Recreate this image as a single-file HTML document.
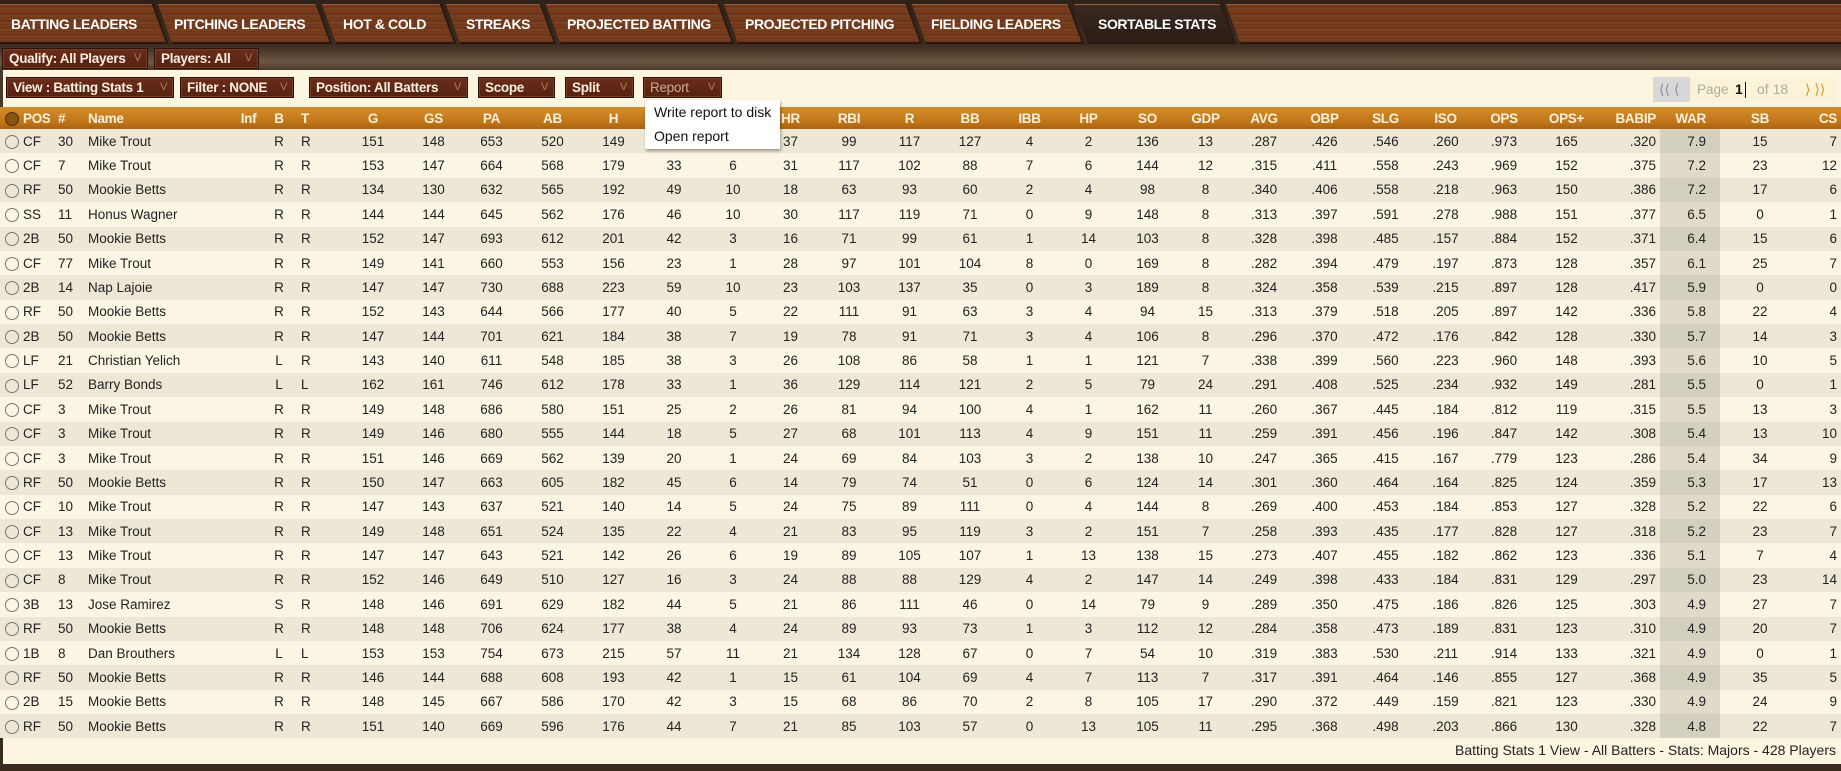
<!DOCTYPE html>
<html><head><meta charset="utf-8"><style>
*{margin:0;padding:0;box-sizing:border-box}
body{width:1841px;height:771px;overflow:hidden;position:relative;background:#3a2a1f;font-family:"Liberation Sans",sans-serif}
.bg{position:absolute;left:0;top:0;width:1841px;height:771px;background:linear-gradient(180deg,#2e2119 0,#3d2b20 45px,#5a4535 55px,#6e5744 62px,#4a382a 70px,#3a2a1f 100%)}
.tabbar{position:absolute;left:0;top:4px;height:40px;width:1841px;overflow:hidden}
.tab{position:absolute;top:0;height:40px;transform:skewX(20deg);background:repeating-linear-gradient(180deg,#7a3f20 0,#6a3318 3px,#7e4422 5px,#6b3419 7px);border-right:2px solid #2a1a12;border-bottom:2px solid #2a1710;box-shadow:inset 0 1px 0 #9a5a32}
.tab.act{background:linear-gradient(180deg,#3a2a20,#2a1d16)}
.tl{position:absolute;top:12px;font-weight:bold;font-size:14px;color:#fff;letter-spacing:-0.4px;white-space:nowrap}
.btn{position:absolute;height:21px;background:linear-gradient(180deg,#6a2d1a,#55220f);border:1px solid #2c130a;box-shadow:inset 0 0 0 1px #7b3c24;color:#fbeee0;font-weight:bold;font-size:13.5px;letter-spacing:-0.3px;line-height:19px;padding-left:6px;white-space:nowrap}
.btn i{position:absolute;right:6px;top:0;font-style:normal;font-weight:normal;color:#b07a60;font-size:11px}
.panel{position:absolute;left:3px;top:70px;width:1838px;height:694px;background:#fcf6e0}
table{position:absolute;left:0;top:107px;border-collapse:collapse;table-layout:fixed;width:1841px;font-size:13.5px;color:#222}
td{height:24.375px;text-align:center;white-space:nowrap;overflow:hidden;padding:0}
thead td{height:22px;background:linear-gradient(180deg,#d38d2c,#c07518 70%,#a86212);color:#fbf0dc;font-weight:bold;font-size:13.5px;letter-spacing:-0.3px}
tbody tr:nth-child(odd) td{background:#ede8d5}
tbody tr:nth-child(even) td{background:#fbf6e3}
tbody tr:nth-child(odd) td.w{background:#d4d0be}
tbody tr:nth-child(even) td.w{background:#dfdbc8}
td.l{text-align:left}
td.p{text-align:left;padding-left:3px}
td.r{text-align:right;padding-right:4px}
td.w{text-align:right;padding-right:14px}
.rad{display:inline-block;width:14px;height:14px;border:1.5px solid #777;border-radius:50%;vertical-align:middle;margin-left:4px}
.rad.hd{background:#8a5412;border-color:#4e300c}
.menu{position:absolute;left:645px;top:100px;width:135px;height:49px;background:#fff;box-shadow:1px 2px 3px rgba(0,0,0,.35);font-size:14px;color:#111;z-index:3}
.menu div{height:24px;line-height:24px;padding-left:9px}
.pager{position:absolute;left:1653px;top:77px;width:184px;height:25px;background:#fbf3d8;font-size:14px;line-height:25px}
</style></head><body>
<div class="bg"></div>
<div class="tabbar">
<div class="tab" style="left:-10px;width:171px"></div>
<div class="tab" style="left:165px;width:160px"></div>
<div class="tab" style="left:329px;width:120px"></div>
<div class="tab" style="left:453px;width:96px"></div>
<div class="tab" style="left:553px;width:174px"></div>
<div class="tab" style="left:731px;width:184px"></div>
<div class="tab" style="left:919px;width:158px"></div>
<div class="tab act" style="left:1081px;width:148px"></div>
<div class="tab" style="left:1233px;width:640px"></div>
<span class="tl" style="left:11px">BATTING LEADERS</span>
<span class="tl" style="left:174px">PITCHING LEADERS</span>
<span class="tl" style="left:343px">HOT &amp; COLD</span>
<span class="tl" style="left:466px">STREAKS</span>
<span class="tl" style="left:567px">PROJECTED BATTING</span>
<span class="tl" style="left:745px">PROJECTED PITCHING</span>
<span class="tl" style="left:931px">FIELDING LEADERS</span>
<span class="tl" style="left:1098px">SORTABLE STATS</span>
</div>
<div class="btn" style="left:2px;top:48px;width:146px">Qualify: All Players<i>V</i></div>
<div class="btn" style="left:154px;top:48px;width:105px">Players: All<i>V</i></div>
<div class="panel"></div>
<div class="btn" style="left:6px;top:77px;width:168px">View : Batting Stats 1<i>V</i></div>
<div class="btn" style="left:180px;top:77px;width:114px">Filter : NONE<i>V</i></div>
<div class="btn" style="left:309px;top:77px;width:159px">Position: All Batters<i>V</i></div>
<div class="btn" style="left:478px;top:77px;width:77px">Scope<i>V</i></div>
<div class="btn" style="left:565px;top:77px;width:69px">Split<i>V</i></div>
<div class="btn" style="left:643px;top:77px;width:79px;color:#c9a898;font-weight:normal">Report<i>V</i></div>
<div class="menu"><div>Write report to disk</div><div>Open report</div></div>
<div class="pager"><span style="position:absolute;left:0;top:0;width:37px;height:25px;background:#d8d8d8;color:#8a8fa0;padding-left:6px">⟨⟨ ⟨</span><span style="position:absolute;left:44px;color:#b0ab9c;font-size:13.5px">Page</span><span style="position:absolute;left:82px;color:#111;font-weight:bold">1</span><span style="position:absolute;left:92px;top:5px;width:1px;height:16px;background:#111"></span><span style="position:absolute;left:104px;color:#b0ab9c">of 18</span><span style="position:absolute;left:152px;color:#e0951c">⟩ ⟩⟩</span></div>
<table>
<colgroup><col style="width:20px"><col style="width:30px"><col style="width:34px"><col style="width:148px"><col style="width:33px"><col style="width:28px"><col style="width:47px"><col style="width:66px"><col style="width:55px"><col style="width:61px"><col style="width:61px"><col style="width:61px"><col style="width:60px"><col style="width:58px"><col style="width:57px"><col style="width:60px"><col style="width:61px"><col style="width:60px"><col style="width:59px"><col style="width:59px"><col style="width:59px"><col style="width:57px"><col style="width:60px"><col style="width:61px"><col style="width:61px"><col style="width:59px"><col style="width:58px"><col style="width:67px"><col style="width:60px"><col style="width:60px"><col style="width:80px"><col style="width:41px"></colgroup>
<thead>
<tr><td><span class="rad hd"></span></td><td class="p">POS</td><td class="l" style="padding-left:8px">#</td><td class="l" style="padding-left:4px">Name</td><td>Inf</td><td>B</td><td class="l" style="padding-left:8px">T</td><td>G</td><td>GS</td><td>PA</td><td>AB</td><td>H</td><td>2B</td><td>3B</td><td>HR</td><td>RBI</td><td>R</td><td>BB</td><td>IBB</td><td>HP</td><td>SO</td><td>GDP</td><td>AVG</td><td>OBP</td><td>SLG</td><td>ISO</td><td>OPS</td><td>OPS+</td><td class="r">BABIP</td><td class="w">WAR</td><td>SB</td><td class="r">CS</td></tr>
</thead>
<tbody>
<tr><td><span class="rad"></span></td><td class="p">CF</td><td class="l" style="padding-left:8px">30</td><td class="l" style="padding-left:4px">Mike Trout</td><td></td><td>R</td><td class="l" style="padding-left:8px">R</td><td>151</td><td>148</td><td>653</td><td>520</td><td>149</td><td>31</td><td>3</td><td>37</td><td>99</td><td>117</td><td>127</td><td>4</td><td>2</td><td>136</td><td>13</td><td>.287</td><td>.426</td><td>.546</td><td>.260</td><td>.973</td><td>165</td><td class="r">.320</td><td class="w">7.9</td><td>15</td><td class="r">7</td></tr>
<tr><td><span class="rad"></span></td><td class="p">CF</td><td class="l" style="padding-left:8px">7</td><td class="l" style="padding-left:4px">Mike Trout</td><td></td><td>R</td><td class="l" style="padding-left:8px">R</td><td>153</td><td>147</td><td>664</td><td>568</td><td>179</td><td>33</td><td>6</td><td>31</td><td>117</td><td>102</td><td>88</td><td>7</td><td>6</td><td>144</td><td>12</td><td>.315</td><td>.411</td><td>.558</td><td>.243</td><td>.969</td><td>152</td><td class="r">.375</td><td class="w">7.2</td><td>23</td><td class="r">12</td></tr>
<tr><td><span class="rad"></span></td><td class="p">RF</td><td class="l" style="padding-left:8px">50</td><td class="l" style="padding-left:4px">Mookie Betts</td><td></td><td>R</td><td class="l" style="padding-left:8px">R</td><td>134</td><td>130</td><td>632</td><td>565</td><td>192</td><td>49</td><td>10</td><td>18</td><td>63</td><td>93</td><td>60</td><td>2</td><td>4</td><td>98</td><td>8</td><td>.340</td><td>.406</td><td>.558</td><td>.218</td><td>.963</td><td>150</td><td class="r">.386</td><td class="w">7.2</td><td>17</td><td class="r">6</td></tr>
<tr><td><span class="rad"></span></td><td class="p">SS</td><td class="l" style="padding-left:8px">11</td><td class="l" style="padding-left:4px">Honus Wagner</td><td></td><td>R</td><td class="l" style="padding-left:8px">R</td><td>144</td><td>144</td><td>645</td><td>562</td><td>176</td><td>46</td><td>10</td><td>30</td><td>117</td><td>119</td><td>71</td><td>0</td><td>9</td><td>148</td><td>8</td><td>.313</td><td>.397</td><td>.591</td><td>.278</td><td>.988</td><td>151</td><td class="r">.377</td><td class="w">6.5</td><td>0</td><td class="r">1</td></tr>
<tr><td><span class="rad"></span></td><td class="p">2B</td><td class="l" style="padding-left:8px">50</td><td class="l" style="padding-left:4px">Mookie Betts</td><td></td><td>R</td><td class="l" style="padding-left:8px">R</td><td>152</td><td>147</td><td>693</td><td>612</td><td>201</td><td>42</td><td>3</td><td>16</td><td>71</td><td>99</td><td>61</td><td>1</td><td>14</td><td>103</td><td>8</td><td>.328</td><td>.398</td><td>.485</td><td>.157</td><td>.884</td><td>152</td><td class="r">.371</td><td class="w">6.4</td><td>15</td><td class="r">6</td></tr>
<tr><td><span class="rad"></span></td><td class="p">CF</td><td class="l" style="padding-left:8px">77</td><td class="l" style="padding-left:4px">Mike Trout</td><td></td><td>R</td><td class="l" style="padding-left:8px">R</td><td>149</td><td>141</td><td>660</td><td>553</td><td>156</td><td>23</td><td>1</td><td>28</td><td>97</td><td>101</td><td>104</td><td>8</td><td>0</td><td>169</td><td>8</td><td>.282</td><td>.394</td><td>.479</td><td>.197</td><td>.873</td><td>128</td><td class="r">.357</td><td class="w">6.1</td><td>25</td><td class="r">7</td></tr>
<tr><td><span class="rad"></span></td><td class="p">2B</td><td class="l" style="padding-left:8px">14</td><td class="l" style="padding-left:4px">Nap Lajoie</td><td></td><td>R</td><td class="l" style="padding-left:8px">R</td><td>147</td><td>147</td><td>730</td><td>688</td><td>223</td><td>59</td><td>10</td><td>23</td><td>103</td><td>137</td><td>35</td><td>0</td><td>3</td><td>189</td><td>8</td><td>.324</td><td>.358</td><td>.539</td><td>.215</td><td>.897</td><td>128</td><td class="r">.417</td><td class="w">5.9</td><td>0</td><td class="r">0</td></tr>
<tr><td><span class="rad"></span></td><td class="p">RF</td><td class="l" style="padding-left:8px">50</td><td class="l" style="padding-left:4px">Mookie Betts</td><td></td><td>R</td><td class="l" style="padding-left:8px">R</td><td>152</td><td>143</td><td>644</td><td>566</td><td>177</td><td>40</td><td>5</td><td>22</td><td>111</td><td>91</td><td>63</td><td>3</td><td>4</td><td>94</td><td>15</td><td>.313</td><td>.379</td><td>.518</td><td>.205</td><td>.897</td><td>142</td><td class="r">.336</td><td class="w">5.8</td><td>22</td><td class="r">4</td></tr>
<tr><td><span class="rad"></span></td><td class="p">2B</td><td class="l" style="padding-left:8px">50</td><td class="l" style="padding-left:4px">Mookie Betts</td><td></td><td>R</td><td class="l" style="padding-left:8px">R</td><td>147</td><td>144</td><td>701</td><td>621</td><td>184</td><td>38</td><td>7</td><td>19</td><td>78</td><td>91</td><td>71</td><td>3</td><td>4</td><td>106</td><td>8</td><td>.296</td><td>.370</td><td>.472</td><td>.176</td><td>.842</td><td>128</td><td class="r">.330</td><td class="w">5.7</td><td>14</td><td class="r">3</td></tr>
<tr><td><span class="rad"></span></td><td class="p">LF</td><td class="l" style="padding-left:8px">21</td><td class="l" style="padding-left:4px">Christian Yelich</td><td></td><td>L</td><td class="l" style="padding-left:8px">R</td><td>143</td><td>140</td><td>611</td><td>548</td><td>185</td><td>38</td><td>3</td><td>26</td><td>108</td><td>86</td><td>58</td><td>1</td><td>1</td><td>121</td><td>7</td><td>.338</td><td>.399</td><td>.560</td><td>.223</td><td>.960</td><td>148</td><td class="r">.393</td><td class="w">5.6</td><td>10</td><td class="r">5</td></tr>
<tr><td><span class="rad"></span></td><td class="p">LF</td><td class="l" style="padding-left:8px">52</td><td class="l" style="padding-left:4px">Barry Bonds</td><td></td><td>L</td><td class="l" style="padding-left:8px">L</td><td>162</td><td>161</td><td>746</td><td>612</td><td>178</td><td>33</td><td>1</td><td>36</td><td>129</td><td>114</td><td>121</td><td>2</td><td>5</td><td>79</td><td>24</td><td>.291</td><td>.408</td><td>.525</td><td>.234</td><td>.932</td><td>149</td><td class="r">.281</td><td class="w">5.5</td><td>0</td><td class="r">1</td></tr>
<tr><td><span class="rad"></span></td><td class="p">CF</td><td class="l" style="padding-left:8px">3</td><td class="l" style="padding-left:4px">Mike Trout</td><td></td><td>R</td><td class="l" style="padding-left:8px">R</td><td>149</td><td>148</td><td>686</td><td>580</td><td>151</td><td>25</td><td>2</td><td>26</td><td>81</td><td>94</td><td>100</td><td>4</td><td>1</td><td>162</td><td>11</td><td>.260</td><td>.367</td><td>.445</td><td>.184</td><td>.812</td><td>119</td><td class="r">.315</td><td class="w">5.5</td><td>13</td><td class="r">3</td></tr>
<tr><td><span class="rad"></span></td><td class="p">CF</td><td class="l" style="padding-left:8px">3</td><td class="l" style="padding-left:4px">Mike Trout</td><td></td><td>R</td><td class="l" style="padding-left:8px">R</td><td>149</td><td>146</td><td>680</td><td>555</td><td>144</td><td>18</td><td>5</td><td>27</td><td>68</td><td>101</td><td>113</td><td>4</td><td>9</td><td>151</td><td>11</td><td>.259</td><td>.391</td><td>.456</td><td>.196</td><td>.847</td><td>142</td><td class="r">.308</td><td class="w">5.4</td><td>13</td><td class="r">10</td></tr>
<tr><td><span class="rad"></span></td><td class="p">CF</td><td class="l" style="padding-left:8px">3</td><td class="l" style="padding-left:4px">Mike Trout</td><td></td><td>R</td><td class="l" style="padding-left:8px">R</td><td>151</td><td>146</td><td>669</td><td>562</td><td>139</td><td>20</td><td>1</td><td>24</td><td>69</td><td>84</td><td>103</td><td>3</td><td>2</td><td>138</td><td>10</td><td>.247</td><td>.365</td><td>.415</td><td>.167</td><td>.779</td><td>123</td><td class="r">.286</td><td class="w">5.4</td><td>34</td><td class="r">9</td></tr>
<tr><td><span class="rad"></span></td><td class="p">RF</td><td class="l" style="padding-left:8px">50</td><td class="l" style="padding-left:4px">Mookie Betts</td><td></td><td>R</td><td class="l" style="padding-left:8px">R</td><td>150</td><td>147</td><td>663</td><td>605</td><td>182</td><td>45</td><td>6</td><td>14</td><td>79</td><td>74</td><td>51</td><td>0</td><td>6</td><td>124</td><td>14</td><td>.301</td><td>.360</td><td>.464</td><td>.164</td><td>.825</td><td>124</td><td class="r">.359</td><td class="w">5.3</td><td>17</td><td class="r">13</td></tr>
<tr><td><span class="rad"></span></td><td class="p">CF</td><td class="l" style="padding-left:8px">10</td><td class="l" style="padding-left:4px">Mike Trout</td><td></td><td>R</td><td class="l" style="padding-left:8px">R</td><td>147</td><td>143</td><td>637</td><td>521</td><td>140</td><td>14</td><td>5</td><td>24</td><td>75</td><td>89</td><td>111</td><td>0</td><td>4</td><td>144</td><td>8</td><td>.269</td><td>.400</td><td>.453</td><td>.184</td><td>.853</td><td>127</td><td class="r">.328</td><td class="w">5.2</td><td>22</td><td class="r">6</td></tr>
<tr><td><span class="rad"></span></td><td class="p">CF</td><td class="l" style="padding-left:8px">13</td><td class="l" style="padding-left:4px">Mike Trout</td><td></td><td>R</td><td class="l" style="padding-left:8px">R</td><td>149</td><td>148</td><td>651</td><td>524</td><td>135</td><td>22</td><td>4</td><td>21</td><td>83</td><td>95</td><td>119</td><td>3</td><td>2</td><td>151</td><td>7</td><td>.258</td><td>.393</td><td>.435</td><td>.177</td><td>.828</td><td>127</td><td class="r">.318</td><td class="w">5.2</td><td>23</td><td class="r">7</td></tr>
<tr><td><span class="rad"></span></td><td class="p">CF</td><td class="l" style="padding-left:8px">13</td><td class="l" style="padding-left:4px">Mike Trout</td><td></td><td>R</td><td class="l" style="padding-left:8px">R</td><td>147</td><td>147</td><td>643</td><td>521</td><td>142</td><td>26</td><td>6</td><td>19</td><td>89</td><td>105</td><td>107</td><td>1</td><td>13</td><td>138</td><td>15</td><td>.273</td><td>.407</td><td>.455</td><td>.182</td><td>.862</td><td>123</td><td class="r">.336</td><td class="w">5.1</td><td>7</td><td class="r">4</td></tr>
<tr><td><span class="rad"></span></td><td class="p">CF</td><td class="l" style="padding-left:8px">8</td><td class="l" style="padding-left:4px">Mike Trout</td><td></td><td>R</td><td class="l" style="padding-left:8px">R</td><td>152</td><td>146</td><td>649</td><td>510</td><td>127</td><td>16</td><td>3</td><td>24</td><td>88</td><td>88</td><td>129</td><td>4</td><td>2</td><td>147</td><td>14</td><td>.249</td><td>.398</td><td>.433</td><td>.184</td><td>.831</td><td>129</td><td class="r">.297</td><td class="w">5.0</td><td>23</td><td class="r">14</td></tr>
<tr><td><span class="rad"></span></td><td class="p">3B</td><td class="l" style="padding-left:8px">13</td><td class="l" style="padding-left:4px">Jose Ramirez</td><td></td><td>S</td><td class="l" style="padding-left:8px">R</td><td>148</td><td>146</td><td>691</td><td>629</td><td>182</td><td>44</td><td>5</td><td>21</td><td>86</td><td>111</td><td>46</td><td>0</td><td>14</td><td>79</td><td>9</td><td>.289</td><td>.350</td><td>.475</td><td>.186</td><td>.826</td><td>125</td><td class="r">.303</td><td class="w">4.9</td><td>27</td><td class="r">7</td></tr>
<tr><td><span class="rad"></span></td><td class="p">RF</td><td class="l" style="padding-left:8px">50</td><td class="l" style="padding-left:4px">Mookie Betts</td><td></td><td>R</td><td class="l" style="padding-left:8px">R</td><td>148</td><td>148</td><td>706</td><td>624</td><td>177</td><td>38</td><td>4</td><td>24</td><td>89</td><td>93</td><td>73</td><td>1</td><td>3</td><td>112</td><td>12</td><td>.284</td><td>.358</td><td>.473</td><td>.189</td><td>.831</td><td>123</td><td class="r">.310</td><td class="w">4.9</td><td>20</td><td class="r">7</td></tr>
<tr><td><span class="rad"></span></td><td class="p">1B</td><td class="l" style="padding-left:8px">8</td><td class="l" style="padding-left:4px">Dan Brouthers</td><td></td><td>L</td><td class="l" style="padding-left:8px">L</td><td>153</td><td>153</td><td>754</td><td>673</td><td>215</td><td>57</td><td>11</td><td>21</td><td>134</td><td>128</td><td>67</td><td>0</td><td>7</td><td>54</td><td>10</td><td>.319</td><td>.383</td><td>.530</td><td>.211</td><td>.914</td><td>133</td><td class="r">.321</td><td class="w">4.9</td><td>0</td><td class="r">1</td></tr>
<tr><td><span class="rad"></span></td><td class="p">RF</td><td class="l" style="padding-left:8px">50</td><td class="l" style="padding-left:4px">Mookie Betts</td><td></td><td>R</td><td class="l" style="padding-left:8px">R</td><td>146</td><td>144</td><td>688</td><td>608</td><td>193</td><td>42</td><td>1</td><td>15</td><td>61</td><td>104</td><td>69</td><td>4</td><td>7</td><td>113</td><td>7</td><td>.317</td><td>.391</td><td>.464</td><td>.146</td><td>.855</td><td>127</td><td class="r">.368</td><td class="w">4.9</td><td>35</td><td class="r">5</td></tr>
<tr><td><span class="rad"></span></td><td class="p">2B</td><td class="l" style="padding-left:8px">15</td><td class="l" style="padding-left:4px">Mookie Betts</td><td></td><td>R</td><td class="l" style="padding-left:8px">R</td><td>148</td><td>145</td><td>667</td><td>586</td><td>170</td><td>42</td><td>3</td><td>15</td><td>68</td><td>86</td><td>70</td><td>2</td><td>8</td><td>105</td><td>17</td><td>.290</td><td>.372</td><td>.449</td><td>.159</td><td>.821</td><td>123</td><td class="r">.330</td><td class="w">4.9</td><td>24</td><td class="r">9</td></tr>
<tr><td><span class="rad"></span></td><td class="p">RF</td><td class="l" style="padding-left:8px">50</td><td class="l" style="padding-left:4px">Mookie Betts</td><td></td><td>R</td><td class="l" style="padding-left:8px">R</td><td>151</td><td>140</td><td>669</td><td>596</td><td>176</td><td>44</td><td>7</td><td>21</td><td>85</td><td>103</td><td>57</td><td>0</td><td>13</td><td>105</td><td>11</td><td>.295</td><td>.368</td><td>.498</td><td>.203</td><td>.866</td><td>130</td><td class="r">.328</td><td class="w">4.8</td><td>22</td><td class="r">7</td></tr>
</tbody></table>
<div style="position:absolute;right:5px;top:742px;font-size:14px;color:#222">Batting Stats 1 View - All Batters - Stats: Majors - 428 Players</div>
</body></html>
